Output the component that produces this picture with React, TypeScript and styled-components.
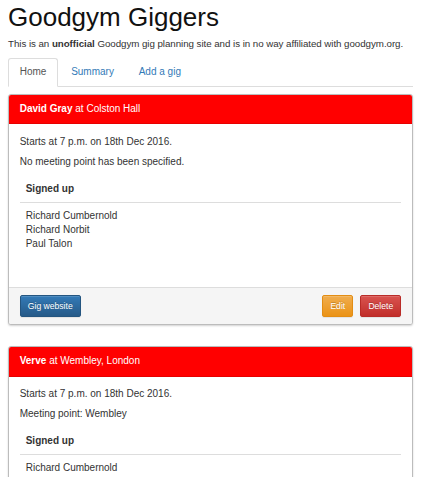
import React from 'react';
import styled, {createGlobalStyle, css} from 'styled-components';

const GlobalStyle = createGlobalStyle`
  html, body {
    margin: 0;
    padding: 0;
    background: #fff;
  }
  body {
    font-family: "Liberation Sans", Arial, Helvetica, sans-serif;
    font-size: 10px;
    line-height: 14.3px;
    color: #333;
  }
`;

type Gig = {
  artist: string;
  venue: string;
  starts: string;
  meetingPoint?: string;
  people: string[];
};

const gigs: Gig[] = [
  {
    artist: 'David Gray',
    venue: 'Colston Hall',
    starts: '7 p.m. on 18th Dec 2016',
    people: ['Richard Cumbernold', 'Richard Norbit', 'Paul Talon'],
  },
  {
    artist: 'Verve',
    venue: 'Wembley, London',
    starts: '7 p.m. on 18th Dec 2016',
    meetingPoint: 'Wembley',
    people: ['Richard Cumbernold', 'Richard Norbit', 'Paul Talon'],
  },
];

const Page = styled.div`
  padding: 0 8px;
  overflow: hidden;
`;

const Title = styled.h1`
  margin: 3px 0 5px;
  font-size: 26px;
  line-height: 28.6px;
  font-weight: 500;
  color: #111;
`;

const Intro = styled.p`
  margin: 0 0 7px;
  font-size: 9.75px;
  letter-spacing: -0.05px;
  white-space: nowrap;
`;

const Tabs = styled.ul`
  display: flex;
  margin: 0 0 7px;
  padding: 0;
  list-style: none;
  border-bottom: 1px solid #ddd;
`;

const TabItem = styled.li`
  margin: 0 1.4px -1px 0;
`;

const TabLink = styled.a<{$active?: boolean}>`
  display: block;
  padding: 6.5px 10.7px;
  border: 1px solid transparent;
  border-radius: 3px 3px 0 0;
  color: #337ab7;
  text-decoration: none;
  cursor: pointer;
  ${(p) =>
    p.$active &&
    css`
      color: #555;
      background: #fff;
      border-color: #ddd #ddd transparent;
    `}
`;

const Panel = styled.section`
  margin-bottom: 21px;
  border: 1px solid #bcbcbc;
  border-radius: 3px;
  background: #fff;
  box-shadow: 0 1px 2px rgba(0, 0, 0, 0.18);
  overflow: hidden;
`;

const PanelHeading = styled.header`
  padding: 7px 10.7px;
  background: #ff0000;
  color: #fff;
  border-bottom: 0.4px solid #e60000;
  b {
    font-weight: 700;
  }
`;

const PanelBody = styled.div`
  padding: 10.7px;
`;

const Line = styled.p`
  margin: 0 0 5.7px;
`;

const Signups = styled.table`
  width: 100%;
  margin-bottom: 19px;
  border-collapse: collapse;
  th {
    padding: 7px 6px 5.7px;
    text-align: left;
    font-weight: 700;
    border-bottom: 1.4px solid #ddd;
  }
  td {
    padding: 5.7px 6px;
  }
`;

const PanelFooter = styled.footer`
  display: flex;
  justify-content: space-between;
  padding: 7.1px 10.7px;
  background: #f5f5f5;
  border-top: 1px solid #ddd;
`;

const Actions = styled.div`
  display: flex;
  gap: 7px;
`;

const variants = {
  primary: css`
    background-image: linear-gradient(#337ab7, #265a88);
    border-color: #245580;
  `,
  warning: css`
    background-image: linear-gradient(#f0ad4e, #eb9316);
    border-color: #e38d13;
  `,
  danger: css`
    background-image: linear-gradient(#d9534f, #c12e2a);
    border-color: #b92c28;
  `,
};

const Button = styled.button<{$kind: keyof typeof variants}>`
  padding: 3.6px 7.1px;
  font-family: inherit;
  font-size: 8.6px;
  line-height: 12.9px;
  color: #fff;
  text-shadow: 0 -1px 0 rgba(0, 0, 0, 0.2);
  border: 1px solid;
  border-radius: 2px;
  box-shadow: inset 0 1px 0 rgba(255, 255, 255, 0.15), 0 1px 1px rgba(0, 0, 0, 0.075);
  cursor: pointer;
  ${(p) => variants[p.$kind]}
`;

const GigPanel: React.FC<{gig: Gig}> = ({gig}) => (
  <Panel>
    <PanelHeading>
      <b>{gig.artist}</b> at {gig.venue}
    </PanelHeading>
    <PanelBody>
      <Line>Starts at {gig.starts}.</Line>
      <Line>
        {gig.meetingPoint
          ? `Meeting point: ${gig.meetingPoint}`
          : 'No meeting point has been specified.'}
      </Line>
      <Signups>
        <thead>
          <tr>
            <th>Signed up</th>
          </tr>
        </thead>
        <tbody>
          <tr>
            <td>
              {gig.people.map((name) => (
                <div key={name}>{name}</div>
              ))}
            </td>
          </tr>
        </tbody>
      </Signups>
    </PanelBody>
    <PanelFooter>
      <Button $kind="primary">Gig website</Button>
      <Actions>
        <Button $kind="warning">Edit</Button>
        <Button $kind="danger">Delete</Button>
      </Actions>
    </PanelFooter>
  </Panel>
);

export default function App() {
  return (
    <Page>
      <GlobalStyle />
      <Title>Goodgym Giggers</Title>
      <Intro>
        This is an <b>unofficial</b> Goodgym gig planning site and is in no way
        affiliated with goodgym.org.
      </Intro>
      <Tabs>
        <TabItem>
          <TabLink $active>Home</TabLink>
        </TabItem>
        <TabItem>
          <TabLink>Summary</TabLink>
        </TabItem>
        <TabItem>
          <TabLink>Add a gig</TabLink>
        </TabItem>
      </Tabs>
      {gigs.map((gig) => (
        <GigPanel key={gig.artist} gig={gig} />
      ))}
    </Page>
  );
}
